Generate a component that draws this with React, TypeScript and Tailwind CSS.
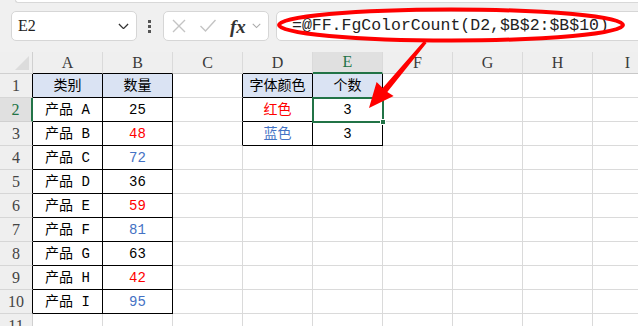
import React from "react";

const COLS = ["A", "B", "C", "D", "E", "F", "G", "H", "I"];
const RED = "text-[#ff0000]";
const BLUE = "text-[#4472c4]";

type CellData = { t: string; c?: string };

const tableA: CellData[][] = [
  [{ t: "类别" }, { t: "数量" }],
  [{ t: "产品 A" }, { t: "25" }],
  [{ t: "产品 B" }, { t: "48", c: RED }],
  [{ t: "产品 C" }, { t: "72", c: BLUE }],
  [{ t: "产品 D" }, { t: "36" }],
  [{ t: "产品 E" }, { t: "59", c: RED }],
  [{ t: "产品 F" }, { t: "81", c: BLUE }],
  [{ t: "产品 G" }, { t: "63" }],
  [{ t: "产品 H" }, { t: "42", c: RED }],
  [{ t: "产品 I" }, { t: "95", c: BLUE }],
];

const tableD: CellData[][] = [
  [{ t: "字体颜色" }, { t: "个数" }],
  [{ t: "红色", c: RED }, { t: "3" }],
  [{ t: "蓝色", c: BLUE }, { t: "3" }],
];

function getCell(r: number, c: number): { data?: CellData; cls: string } {
  // r: 1..11, c: 0..8
  const base = "border-r border-b";
  if ((c === 0 || c === 1) && r <= 10) {
    const d = tableA[r - 1][c];
    return {
      data: d,
      cls: `${base} border-black ${r === 1 ? "bg-[#dae3f3]" : "bg-white"}`,
    };
  }
  if ((c === 3 || c === 4) && r <= 3) {
    const d = tableD[r - 1][c - 3];
    return {
      data: d,
      cls: `${base} border-black ${r === 1 ? "bg-[#dae3f3]" : "bg-white"}`,
    };
  }
  if (c === 2 && r <= 3) {
    return { cls: `${base} border-[#dadada] border-r-black bg-white` };
  }
  return { cls: `${base} border-[#dadada] bg-white` };
}

function XIcon() {
  return (
    <svg width="16" height="16" viewBox="0 0 16 16" fill="none">
      <path d="M2 2L14 14M14 2L2 14" stroke="#c4c4c4" strokeWidth="1.4" />
    </svg>
  );
}
function CheckIcon() {
  return (
    <svg width="18" height="16" viewBox="0 0 18 16" fill="none">
      <path d="M1.5 8L6.5 13L16.5 2" stroke="#c4c4c4" strokeWidth="1.4" />
    </svg>
  );
}
function Chevron({ w = 12, color = "#444", sw = 1.5 }: { w?: number; color?: string; sw?: number }) {
  return (
    <svg width={w} height={w * 0.6} viewBox="0 0 12 7" fill="none">
      <path d="M1 1L6 6L11 1" stroke={color} strokeWidth={sw} />
    </svg>
  );
}

export default function App() {
  const rows = Array.from({ length: 11 }, (_, i) => i + 1);
  return (
    <div className="relative w-[638px] h-[326px] overflow-hidden bg-[#f0f0f0] font-['Liberation_Serif',serif]">
      {/* top strip */}
      <div className="ml-[15px] h-[3px] bg-white border-b border-l border-[#d8d8d8] rounded-bl-[3px]" />
      {/* toolbar */}
      <div className="flex items-center h-[49px] pl-[11px] pb-[3px]">
        <div className="flex items-center justify-between w-[126px] h-[30px] bg-white border border-[#d6d6d6] rounded-[5px] pl-[6px] pr-[7px] shrink-0">
          <span className="text-[16px] text-[#222] leading-none">E2</span>
          <Chevron w={11} color="#333" sw={1.4} />
        </div>
        <div className="flex flex-col gap-[2px] ml-[11px] w-[3px] shrink-0">
          <div className="w-[3px] h-[3px] bg-[#555]" />
          <div className="w-[3px] h-[3px] bg-[#555]" />
          <div className="w-[3px] h-[3px] bg-[#555]" />
        </div>
        <div className="flex items-center w-[106px] h-[30px] ml-[12px] bg-white border border-[#d6d6d6] rounded-[5px] pl-[7px] shrink-0">
          <XIcon />
          <div className="ml-[12px]">
            <CheckIcon />
          </div>
          <span className="ml-[13px] text-[19px] italic font-bold text-[#333] leading-none font-['Liberation_Serif',serif]">
            fx
          </span>
          <div className="ml-[6px]">
            <Chevron w={9} color="#aaa" sw={1.4} />
          </div>
        </div>
        <div className="flex items-center w-[380px] h-[30px] ml-[7px] bg-white border border-[#d6d6d6] rounded-[5px] pl-[15px] shrink-0">
          <span className="text-[16.5px] text-[#222] leading-none font-['Liberation_Mono',monospace]">
            =@FF.FgColorCount(D2,$B$2:$B$10)
          </span>
        </div>
      </div>

      {/* sheet */}
      <div className="flex flex-col">
        {/* column header row */}
        <div className="flex h-[22px]">
          <div className="relative w-[33px] h-[22px] shrink-0 bg-[#efefef] border-r border-b border-[#d0d0d0]">
            <div className="absolute right-[3px] bottom-[3px] w-0 h-0 border-l-[14px] border-l-transparent border-b-[14px] border-b-[#dcdcdc]" />
          </div>
          {COLS.map((col, i) => {
            let cls = "border-r border-[#dadada] border-b border-b-[#c8c8c8] bg-[#efefef] text-[#3a3a3a]";
            if (i === 0 || i === 1 || i === 3) cls = "border-r border-[#dadada] border-b border-b-black bg-[#efefef] text-[#3a3a3a]";
            if (i === 4) cls = "border-r border-[#dadada] border-b-2 border-b-[#217346] bg-[#e0e0e0] text-[#217346]";
            return (
              <div
                key={col}
                className={`w-[70px] h-[22px] shrink-0 flex items-center justify-center text-[16px] leading-none ${cls}`}
              >
                {col}
              </div>
            );
          })}
        </div>
        {rows.map((r) => (
          <div key={r} className="flex h-[24px]">
            <div
              className={`w-[33px] h-[24px] shrink-0 flex items-center justify-center text-[16px] leading-none ${
                r === 2
                  ? "bg-[#e0e0e0] text-[#217346] border-r-2 border-r-[#217346] border-b border-b-[#d0d0d0]"
                  : r <= 10
                  ? "bg-[#efefef] text-[#444] border-r border-r-black border-b border-b-[#d6d6d6]"
                  : "bg-[#efefef] text-[#444] border-r border-r-[#d0d0d0] border-b border-b-[#d6d6d6]"
              }`}
            >
              {r}
            </div>
            {COLS.map((col, c) => {
              const { data, cls } = getCell(r, c);
              const selected = r === 2 && c === 4;
              return (
                <div
                  key={col}
                  className={`relative w-[70px] h-[24px] shrink-0 flex items-center justify-center text-[14px] leading-none font-['Liberation_Mono','Noto_Sans_CJK_SC',monospace] whitespace-pre ${cls} ${
                    data?.c ?? "text-black"
                  } ${selected ? "z-10" : ""}`}
                >
                  {data?.t}
                  {selected && (
                    <>
                      <div className="absolute -left-[1px] -top-[1px] w-[72px] h-[26px] border-2 border-[#217346]" />
                      <div className="absolute left-[67px] top-[21px] w-[6px] h-[6px] bg-[#217346] border border-white" />
                    </>
                  )}
                </div>
              );
            })}
          </div>
        ))}
      </div>

      {/* annotation overlay */}
      <svg
        className="absolute left-0 top-0 z-20 pointer-events-none"
        width="638"
        height="326"
        viewBox="0 0 638 326"
      >
        <ellipse cx="451" cy="25" rx="172" ry="15.5" fill="none" stroke="#ff0000" strokeWidth="4" />
        <polygon
          points="369,108 376.6,82 382.7,88.1 423.9,41 426.6,43 387.3,91.9 393.6,96"
          fill="#ff0000"
        />
      </svg>
    </div>
  );
}
